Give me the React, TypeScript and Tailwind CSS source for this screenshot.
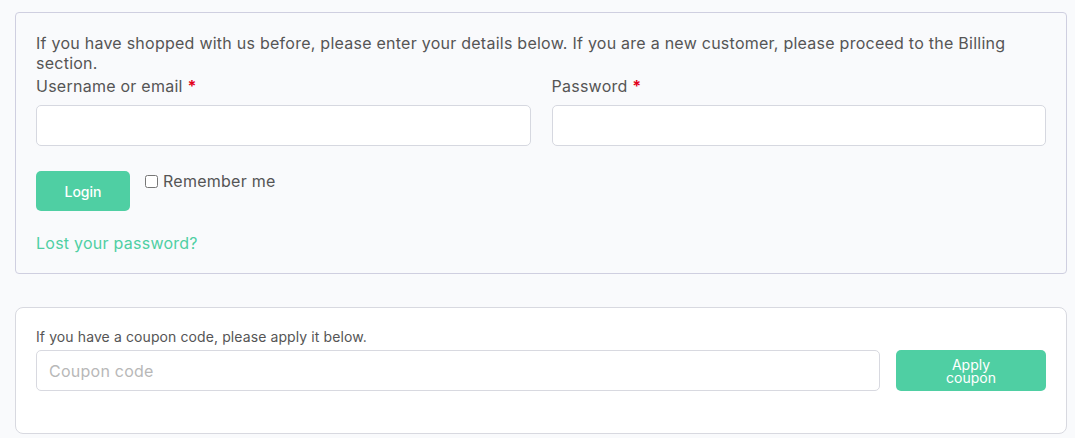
import React, { useState } from 'react';

export default function App() {
  const [remember, setRemember] = useState(false);

  return (
    <div className="min-h-[438px] bg-[#f9fafc] pt-[12px] pb-[5px] pl-[15px] pr-[8px] text-[#555555] font-['Inter','Noto_Sans',sans-serif] tracking-[0.25px]">
      {/* Login box */}
      <form className="rounded-[4px] border border-[#cfcfe0] bg-[#f9fafc] px-[20px] pt-[20px] pb-[20px]">
        <p className="text-[16px] leading-[20px]">
          If you have shopped with us before, please enter your details below. If you are a new customer, please proceed to the Billing section.
        </p>
        <div className="grid grid-cols-2 gap-[21px]">
          <div>
            <label className="block text-[16px] leading-[22px] mt-[2px] mb-[8px]">
              Username or email <span className="text-[#e2001a] font-bold">*</span>
            </label>
            <input type="text" className="h-[41px] w-full rounded-[5px] border border-[#d6d8e0] bg-white px-3 text-[15px] outline-none" />
          </div>
          <div>
            <label className="block text-[16px] leading-[22px] mt-[2px] mb-[8px]">
              Password <span className="text-[#e2001a] font-bold">*</span>
            </label>
            <input type="password" className="h-[41px] w-full rounded-[5px] border border-[#d6d8e0] bg-white px-3 text-[15px] outline-none" />
          </div>
        </div>
        <div className="mt-[25px] flex items-start gap-[15px]">
          <button type="button" className="h-[40px] w-[94px] rounded-[5px] bg-[#4fcfa3] text-[14px] font-medium text-white tracking-normal">
            Login
          </button>
          <label className="flex items-center gap-[5px] text-[16px] leading-[20px]">
            <input
              type="checkbox"
              checked={remember}
              onChange={(e) => setRemember(e.target.checked)}
              className="h-[13px] w-[13px] m-0"
            />
            Remember me
          </label>
        </div>
        <a href="#" className="mt-[22px] block text-[16px] leading-[20px] text-[#4fcfa3]">
          Lost your password?
        </a>
      </form>

      {/* Coupon box */}
      <div className="mt-[33px] rounded-[8px] border border-[#d8d9e0] bg-white px-[20px] pt-[20px] pb-[42px]">
        <p className="text-[14px] leading-[18px] mb-[4px] tracking-[0.1px]">If you have a coupon code, please apply it below.</p>
        <div className="flex gap-[16px]">
          <input
            type="text"
            placeholder="Coupon code"
            className="h-[41px] flex-1 rounded-[5px] border border-[#d8d9e0] bg-white px-[12px] text-[16px] outline-none placeholder:text-[#b8b8b8]"
          />
          <button type="button" className="h-[41px] w-[150px] rounded-[5px] bg-[#4fcfa3] px-[40px] text-[14px] leading-[13px] text-white tracking-normal">
            Apply coupon
          </button>
        </div>
      </div>
    </div>
  );
}
